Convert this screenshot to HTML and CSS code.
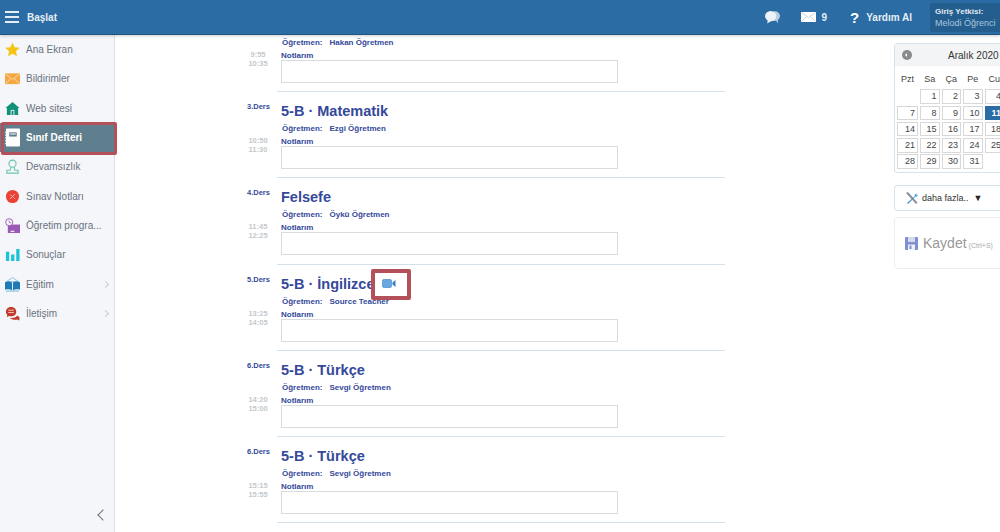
FILE: index.html
```html
<!DOCTYPE html>
<html lang="tr">
<head>
<meta charset="utf-8">
<title>Sınıf Defteri</title>
<link rel="stylesheet" href="styles.css">
</head>
<body>
<header class="topbar">
  <div class="brand">
    <span class="burger"><i></i><i></i><i></i></span>
    <span class="brand-text">Başlat</span>
  </div>
  <div class="top-actions">
    <svg class="chat-ico" viewBox="0 0 16 15" width="15" height="15"><ellipse cx="10.500" cy="6" rx="5.500" ry="5.200" fill="#b9cede"/><path d="M11 10l3 4-.5-5z" fill="#b9cede"/><ellipse cx="6" cy="6" rx="6" ry="5.500" fill="#eef3f7"/><path d="M3 10l-.6 4L7 11z" fill="#eef3f7"/></svg>
    <svg class="mail-ico" viewBox="0 0 15 10" width="15" height="10"><rect width="15" height="10" fill="#fff"/><path d="M0.500 .5l7 5 7-5M.5 9.500l5-5M14.500 9.500l-5-5" fill="none" stroke="#b5c9da" stroke-width=".8"/></svg>
    <span class="mail-count">9</span>
    <span class="help-mark">?</span>
    <span class="help-text">Yardım Al</span>
    <div class="user-box">
      <div class="user-role">Giriş Yetkisi:</div>
      <div class="user-name">Melodi Öğrenci</div>
    </div>
  </div>
</header>
<div class="main">
  <nav class="sidebar">
    <a class="nav-item"><svg class="nav-ico" viewBox="0 0 16 16"><path d="M8 .5l2.300 5 5.400.6-4 3.700 1.100 5.400L8 12.500l-4.800 2.700 1.100-5.400-4-3.700 5.400-.6z" fill="#f6c416"/></svg><span class="nav-label">Ana Ekran</span></a>
    <a class="nav-item"><svg class="nav-ico" viewBox="0 0 16 16"><rect y="2.500" width="16" height="11.500" fill="#f5a742"/><path d="M.5 3l7.500 6 7.500-6M.5 14l5.500-6M15.500 14l-5.500-6" fill="none" stroke="#fde3bd" stroke-width=".9"/></svg><span class="nav-label">Bildirimler</span></a>
    <a class="nav-item"><svg class="nav-ico" viewBox="0 0 16 16"><path d="M8 1l7.500 6.500H14V15H2V7.500H.5z" fill="#119178"/><rect x="6" y="9.500" width="4" height="5.500" fill="#e4f2ef"/><rect x="7" y="10.500" width="2" height="4.500" fill="#119178"/></svg><span class="nav-label">Web sitesi</span></a>
    <a class="nav-item active"><svg class="nav-ico book" viewBox="0 0 16 19"><rect x="1" width="15" height="19" rx="1" fill="#fff"/><rect x="4.500" y="4" width="8" height="4.500" fill="#5f7f8e"/><rect x="5.500" y="5" width="6" height="1.500" fill="#cfdbe1"/><path d="M0 4h2M0 7h2M0 10h2M0 13h2M0 16h2" stroke="#fff"/></svg><span class="nav-label">Sınıf Defteri</span></a>
    <a class="nav-item"><svg class="nav-ico" viewBox="0 0 16 16"><circle cx="8" cy="5" r="3.800" fill="none" stroke="#6cc4ae" stroke-width="1.200"/><path d="M6.500 8.500L5.500 12H2v3h12v-3h-3.500l-1-3.500" fill="none" stroke="#6cc4ae" stroke-width="1.200"/></svg><span class="nav-label">Devamsızlık</span></a>
    <a class="nav-item"><svg class="nav-ico" viewBox="0 0 16 16"><circle cx="8" cy="8" r="7" fill="#ea4335"/><path d="M5.500 10.500l5-5M5.500 6l1.500 1.500M9 9l1.500 1.500" stroke="#f9c9c4" stroke-width="1"/></svg><span class="nav-label">Sınav Notları</span></a>
    <a class="nav-item"><svg class="nav-ico" viewBox="0 0 16 16"><rect x="3" y="7" width="13" height="9" fill="#9a59b5"/><rect x="6" y="13.500" width="4" height="1.500" fill="#f0e2f5"/><circle cx="4.500" cy="4.500" r="3.800" fill="#f4f6f9" stroke="#9a59b5"/><path d="M4.500 2.500v2.500h2" fill="none" stroke="#9a59b5" stroke-width=".8"/></svg><span class="nav-label">Öğretim progra...</span></a>
    <a class="nav-item"><svg class="nav-ico" viewBox="0 0 16 16"><path d="M1 5h3.500v10H1zM6.500 8H10v7H6.500zM12 2h3.500v13H12z" fill="#1cc2d6"/></svg><span class="nav-label">Sonuçlar</span></a>
    <a class="nav-item"><svg class="nav-ico" viewBox="0 0 16 16"><path d="M8 .5l6.500 4.500H1.500z" fill="none" stroke="#6fb1de" stroke-width=".8"/><path d="M0 5.500c3-1 6-.6 7.500.5v8c-2-1-4.500-1.300-7.500-.5zM16 5.500c-3-1-6-.6-7.500.5v8c2-1 4.500-1.300 7.500-.5z" fill="#1f7ab5"/><path d="M1 15h14" stroke="#6fb1de"/></svg><span class="nav-label">Eğitim</span><span class="chev"></span></a>
    <a class="nav-item"><svg class="nav-ico" viewBox="0 0 16 16"><path d="M1 6c0-3 2.500-5 5.500-5S12 3 12 6s-2.500 5-5.500 5c-.8 0-1.500 0-2.200-.4L2 12l.5-2.800C1.500 8.500 1 7.300 1 6z" fill="#c0392b"/><path d="M5 12.500c3 .8 6 .2 8-2 1.500.5 2.500 1.500 2.500 2.800 0 .7-.3 1.200-.5 2.200l-2-1c-3 .5-6 0-8-2z" fill="#c0392b"/><path d="M3.500 4.500h6M3.500 7h6" stroke="#f3cfcb"/></svg><span class="nav-label">İletişim</span><span class="chev"></span></a>
    <span class="collapse-chev"></span>
  </nav>
  <section class="content">
    <div class="lesson first">
      <div class="lesson-side"><div class="times"><div>9:55</div><div>10:35</div></div></div>
      <div class="lesson-body">
        <div class="teacher"><span>Öğretmen:</span><span>Hakan Öğretmen</span></div>
        <div class="notes-label">Notlarım</div>
        <div class="notes-box"></div>
      </div>
    </div>
    <div class="lesson">
      <div class="lesson-side"><div class="period">3.Ders</div><div class="times"><div>10:50</div><div>11:30</div></div></div>
      <div class="lesson-body">
        <h2 class="title">5-B · Matematik</h2>
        <div class="teacher"><span>Öğretmen:</span><span>Ezgi Öğretmen</span></div>
        <div class="notes-label">Notlarım</div>
        <div class="notes-box"></div>
      </div>
    </div>
    <div class="lesson">
      <div class="lesson-side"><div class="period">4.Ders</div><div class="times"><div>11:45</div><div>12:25</div></div></div>
      <div class="lesson-body">
        <h2 class="title">Felsefe</h2>
        <div class="teacher"><span>Öğretmen:</span><span>Öykü Öğretmen</span></div>
        <div class="notes-label">Notlarım</div>
        <div class="notes-box"></div>
      </div>
    </div>
    <div class="lesson">
      <div class="lesson-side"><div class="period">5.Ders</div><div class="times"><div>13:25</div><div>14:05</div></div></div>
      <div class="lesson-body">
        <h2 class="title">5-B · İngilizce<span class="video-mark"><svg viewBox="0 0 14 9" width="14" height="9"><rect x=".3" y=".3" width="9.400" height="8.400" rx="2.200" fill="#6aa7e0" stroke="#3f7fc0" stroke-width=".6"/><path d="M10.500 3.500L13.500 1v7l-3-2.500z" fill="#3f7fc0"/></svg></span></h2>
        <div class="teacher"><span>Öğretmen:</span><span>Source Teacher</span></div>
        <div class="notes-label">Notlarım</div>
        <div class="notes-box"></div>
      </div>
    </div>
    <div class="lesson">
      <div class="lesson-side"><div class="period">6.Ders</div><div class="times"><div>14:20</div><div>15:00</div></div></div>
      <div class="lesson-body">
        <h2 class="title">5-B · Türkçe</h2>
        <div class="teacher"><span>Öğretmen:</span><span>Sevgi Öğretmen</span></div>
        <div class="notes-label">Notlarım</div>
        <div class="notes-box"></div>
      </div>
    </div>
    <div class="lesson">
      <div class="lesson-side"><div class="period">6.Ders</div><div class="times"><div>15:15</div><div>15:55</div></div></div>
      <div class="lesson-body">
        <h2 class="title">5-B · Türkçe</h2>
        <div class="teacher"><span>Öğretmen:</span><span>Sevgi Öğretmen</span></div>
        <div class="notes-label">Notlarım</div>
        <div class="notes-box"></div>
      </div>
    </div>
  </section>
  <aside class="panel">
    <div class="calendar">
      <div class="cal-head"><span class="cal-prev"></span><span class="cal-title">Aralık 2020</span></div>
      <div class="cal-grid">
        <span class="dow">Pzt</span><span class="dow">Sa</span><span class="dow">Ça</span><span class="dow">Pe</span><span class="dow">Cu</span>
        <span class="blank"></span><span class="day">1</span><span class="day">2</span><span class="day">3</span><span class="day">4</span>
        <span class="day">7</span><span class="day">8</span><span class="day">9</span><span class="day">10</span><span class="day today">11</span>
        <span class="day">14</span><span class="day">15</span><span class="day">16</span><span class="day">17</span><span class="day">18</span>
        <span class="day">21</span><span class="day">22</span><span class="day">23</span><span class="day">24</span><span class="day">25</span>
        <span class="day">28</span><span class="day">29</span><span class="day">30</span><span class="day">31</span><span class="blank"></span>
      </div>
    </div>
    <div class="more-box">
      <svg viewBox="0 0 14 14" width="14" height="14"><path d="M1 2l2-1 9.500 10.500-1.500 1.500z" fill="#8a949c"/><path d="M12.500 1.500L9.500 4l.5 1L2 12l1 1 7.500-7.500 1 .3 2-2.500-1.500 1-1-1z" fill="#3f95cf"/></svg>
      <span class="more-text">daha fazla..</span><span class="more-arrow">▼</span>
    </div>
    <div class="save-box">
      <svg viewBox="0 0 13 13" width="13" height="13"><rect width="13" height="13" rx="1" fill="#7f8fcf"/><rect x="3" y="0" width="7" height="5" fill="#d4daf0"/><rect x="3" y="7.500" width="7" height="5.500" fill="#eef0f8"/><rect x="4.500" y="8.500" width="2" height="3.500" fill="#7f8fcf"/></svg>
      <span class="save-text">Kaydet</span><span class="save-hint">(Ctrl+S)</span>
    </div>
  </aside>
</div>
<div class="mark mark-nav"></div>
<div class="mark mark-video"></div>
</body>
</html>
```
FILE: styles.css
```css
* { box-sizing: border-box; }
html, body { margin: 0; height: 100%; overflow: hidden; }
body { font-family: "Liberation Sans", Arial, sans-serif; background: #fff; width: 1000px; height: 532px; display: flex; flex-direction: column; position: relative; }
.topbar { height: 35px; flex: none; background: #2a6ca3; border-bottom: 1px solid #1f5580; box-shadow: 0 1px 3px rgba(0,0,0,.2); display: flex; justify-content: space-between; align-items: center; position: relative; z-index: 2; }
.brand { display: flex; align-items: center; padding-left: 5px; }
.burger { display: flex; flex-direction: column; gap: 3px; width: 14px; margin-right: 8px; }
.burger i { display: block; height: 2px; background: #e6eef5; }
.brand-text { color: #e6eef5; font-size: 10px; font-weight: bold; }
.top-actions { display: flex; align-items: center; height: 100%; }
.chat-ico { margin-right: 21px; }
.mail-ico { margin-right: 6px; }
.mail-count { color: #e6eef5; font-size: 10px; font-weight: bold; margin-right: 23px; }
.help-mark { color: #fff; font-size: 15px; font-weight: bold; margin-right: 7px; }
.help-text { color: #e6eef5; font-size: 10px; font-weight: bold; margin-right: 18px; }
.user-box { width: 70px; height: 29px; background: #235e8f; border-radius: 2px 0 0 2px; padding: 4px 0 0 5px; }
.user-role { color: #e0e8ef; font-size: 8px; font-weight: bold; line-height: 10px; }
.user-name { color: #a9c6dd; font-size: 9px; line-height: 13px; white-space: nowrap; }

.main { flex: 1; display: flex; min-height: 0; }
.sidebar { width: 115px; flex: none; background: #f4f6f9; border-right: 1px solid #dcdfe3; position: relative; }
.nav-item { display: flex; align-items: center; height: 29.330px; padding-left: 5px; color: #6b7280; font-size: 10px; position: relative; }
.nav-ico { width: 15px; height: 15px; margin-right: 6px; flex: none; }
.nav-label { white-space: nowrap; }
.nav-item.active { background: #5f7f8e; color: #fff; font-weight: bold; }
.nav-ico.book { height: 19px; }
.chev { position: absolute; left: 103px; width: 5px; height: 5px; border-top: 1px solid #c9ced4; border-right: 1px solid #c9ced4; transform: rotate(45deg); }
.collapse-chev { position: absolute; left: 99px; bottom: 13px; width: 8px; height: 8px; border-bottom: 1.500px solid #6b7280; border-left: 1.500px solid #6b7280; transform: rotate(45deg); }

.content { width: 478px; margin-left: 132px; flex: none; }
.lesson { display: flex; height: 86.300px; }
.lesson.first { height: 57px; }
.lesson-side { width: 30px; flex: none; text-align: center; padding-right: 8px; }
.lesson-body { flex: 1; padding-left: 4px; padding-top: 10px; min-width: 0; border-bottom: 1px solid #d5e1ea; }
.first .lesson-body { padding-top: 1px; }
.first .times { margin-top: 15px; }
.period { color: #34499a; font-size: 7.500px; font-weight: bold; line-height: 10px; margin-top: 10px; white-space: nowrap; }
.times { color: #c4c8cc; font-size: 7.500px; font-weight: bold; line-height: 9px; margin-top: 24px; }
.title { margin: 0; color: #34499a; font-size: 14.500px; font-weight: bold; line-height: 18px; display: flex; align-items: center; }
.video-mark { display: inline-flex; margin-left: 8px; }
.teacher { color: #34499a; font-size: 8px; font-weight: bold; line-height: 10px; margin: 4px 0 0 1px; display: flex; gap: 7px; }
.first .teacher { margin-top: 2px; }
.notes-label { color: #34499a; font-size: 8px; font-weight: bold; line-height: 8px; margin-top: 4px; }
.notes-box { width: 337px; height: 23px; border: 1px solid #d9dcdf; background: #fff; }

.panel { margin-left: 169px; width: 120px; flex: none; padding-top: 8px; display: flex; flex-direction: column; }
.calendar { width: 120px; height: 130px; border: 1px solid #d5e3ed; border-radius: 3px; }
.cal-head { height: 22px; background: #f2f4f6; display: flex; align-items: center; }
.cal-prev { width: 10px; height: 10px; border-radius: 50%; background: #8a8a8a; margin-left: 7px; position: relative; }
.cal-prev::after { content: ""; position: absolute; left: 2.500px; top: 2.500px; border: 2.500px solid transparent; border-right-color: #fff; border-left: 0; }
.cal-title { font-size: 10px; color: #333; margin-left: 36px; white-space: nowrap; }
.cal-grid { display: grid; grid-template-columns: 21px repeat(4, 19.500px); grid-auto-rows: 14.500px; column-gap: 2px; row-gap: 1.800px; padding: 7px 0 0 2px; }
.dow { font-size: 9px; color: #444; text-align: center; line-height: 12px; }
.day { border: 1px solid #d8d8d8; background: #fff; color: #444; font-size: 9px; text-align: right; padding-right: 2px; line-height: 12.500px; }
.day.today { background: #2a6ca3; border-color: #2a6ca3; color: #fff; font-weight: bold; }
.more-box { width: 120px; height: 26px; margin-top: 12px; border: 1px solid #d5e3ed; border-radius: 3px; display: flex; align-items: center; padding-left: 10px; font-size: 9px; color: #333; }
.more-text { margin-left: 3px; }
.more-arrow { margin-left: 5px; font-size: 9px; color: #222; }
.save-box { width: 120px; height: 52px; margin-top: 6px; border: 1px solid #ebeff3; border-radius: 3px; display: flex; align-items: center; padding-left: 10px; }
.save-text { font-size: 14px; color: #999; margin-left: 5px; }
.save-hint { font-size: 7px; color: #aaa; margin-left: 2px; margin-top: 4px; }

.mark { position: absolute; border: 3px solid #b4505a; pointer-events: none; z-index: 3; }
.mark-nav { left: 1px; top: 122px; width: 116px; height: 33px; border-radius: 2px; }
.mark-video { left: 371px; top: 269px; width: 40px; height: 31px; border-width: 4px; border-radius: 2px; }
```
